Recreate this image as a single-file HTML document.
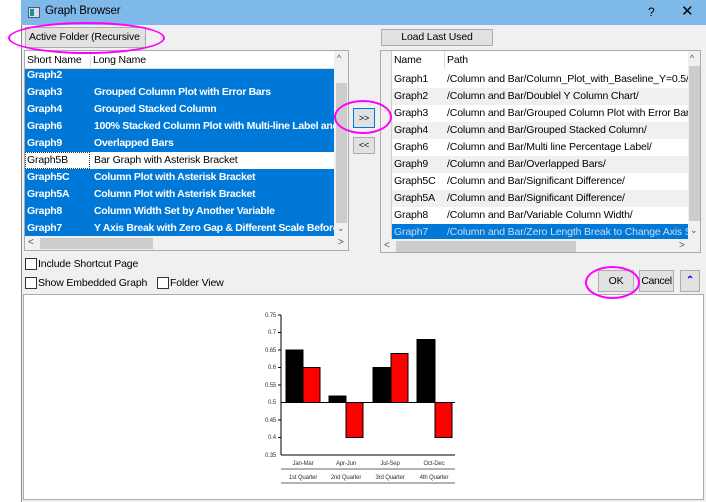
<!DOCTYPE html>
<html><head><style>
*{box-sizing:border-box;margin:0;padding:0}
body{width:706px;height:502px;background:#fff;position:relative;overflow:hidden;font-family:"Liberation Sans",sans-serif;font-size:10.5px;letter-spacing:-0.15px;color:#000}
.a{position:absolute;white-space:nowrap}
.btn{position:absolute;background:#e1e1e1;border:1px solid #adadad;text-align:center;white-space:nowrap}
.row{position:absolute;left:0;height:17px;line-height:17px;white-space:nowrap}
.sel{background:#0078d7;color:#fff;font-weight:bold;letter-spacing:-0.3px}
.cb{position:absolute;width:12px;height:12px;border:1px solid #333;background:#fff}
.ell{position:absolute;border:2px solid #f0f;border-radius:50%}
</style></head><body>
<div class="a" style="left:21px;top:0;width:685px;height:502px;background:#f0f0f0;border-left:1px solid #888"></div>
<div class="a" style="left:21px;top:0;width:685px;height:25px;background:#7fb9ea"></div>
<div class="a" style="left:28px;top:7px;width:12px;height:11px;border:1px solid #557;background:#dde"></div>
<div class="a" style="left:30px;top:9px;width:4px;height:7px;background:#198"></div>
<div class="a" style="left:45px;top:5px;font-size:11.5px">Graph Browser</div>
<div class="a" style="left:648px;top:5px;font-size:12px">?</div>
<div class="a" style="left:681px;top:2px;font-size:15px">✕</div>

<div class="btn" style="left:25px;top:27px;width:121px;height:21px;text-align:left;padding-left:3px;line-height:19px;overflow:hidden">Active Folder (Recursive <span style="font-size:9px;color:#555">&#8964;</span></div>

<div class="a" style="left:24px;top:50px;width:325px;height:201px;background:#fff;border:1px solid #aaa;overflow:hidden">
 <div class="a" style="left:0;top:0;width:310px;height:18px;border-bottom:1px solid #ddd;background:#fff"></div>
 <div class="a" style="left:2px;top:3px">Short Name</div>
 <div class="a" style="left:65px;top:0;width:1px;height:18px;background:#ddd"></div>
 <div class="a" style="left:68px;top:3px">Long Name</div>
 <div class="a" style="left:0;top:18px;width:309px;height:167px;overflow:hidden">
  <div class="row sel" style="top:-2px;width:310px"><span class="a" style="left:2px">Graph2</span></div>
  <div class="row sel" style="top:15px;width:310px"><span class="a" style="left:2px">Graph3</span><span class="a" style="left:69px">Grouped Column Plot with Error Bars</span></div>
  <div class="row sel" style="top:32px;width:310px"><span class="a" style="left:2px">Graph4</span><span class="a" style="left:69px">Grouped Stacked Column</span></div>
  <div class="row sel" style="top:49px;width:310px"><span class="a" style="left:2px">Graph6</span><span class="a" style="left:69px">100% Stacked Column Plot with Multi-line Label and Co</span></div>
  <div class="row sel" style="top:66px;width:310px"><span class="a" style="left:2px">Graph9</span><span class="a" style="left:69px">Overlapped Bars</span></div>
  <div class="row" style="top:83px;width:310px"><span class="a" style="left:0;top:0;width:65px;height:17px;border:1px dotted #333"></span><span class="a" style="left:2px">Graph5B</span><span class="a" style="left:69px">Bar Graph with Asterisk Bracket</span></div>
  <div class="row sel" style="top:100px;width:310px"><span class="a" style="left:2px">Graph5C</span><span class="a" style="left:69px">Column Plot with Asterisk Bracket</span></div>
  <div class="row sel" style="top:117px;width:310px"><span class="a" style="left:2px">Graph5A</span><span class="a" style="left:69px">Column Plot with Asterisk Bracket</span></div>
  <div class="row sel" style="top:134px;width:310px"><span class="a" style="left:2px">Graph8</span><span class="a" style="left:69px">Column Width Set by Another Variable</span></div>
  <div class="row sel" style="top:151px;width:310px"><span class="a" style="left:2px">Graph7</span><span class="a" style="left:69px">Y Axis Break with Zero Gap &amp; Different Scale Before</span></div>
 </div>
 <div class="a" style="left:309px;top:0;width:15px;height:185px;background:#f0f0f0"></div>
 <div class="a" style="left:311px;top:32px;width:11px;height:140px;background:#cdcdcd"></div>
 <div class="a" style="left:312px;top:2px;font-size:9px;color:#555">^</div>
 <div class="a" style="left:312px;top:172px;font-size:9px;color:#555">&#8964;</div>
 <div class="a" style="left:0;top:185px;width:324px;height:15px;background:#f0f0f0"></div>
 <div class="a" style="left:15px;top:187px;width:113px;height:11px;background:#cdcdcd"></div>
 <div class="a" style="left:3px;top:186px;font-size:10px;color:#555">&lt;</div>
 <div class="a" style="left:313px;top:186px;font-size:10px;color:#555">&gt;</div>
</div>

<div class="btn" style="left:353px;top:108px;width:22px;height:20px;border:1px solid #0078d7;line-height:18px;font-size:9px">&gt;&gt;</div>
<div class="btn" style="left:353px;top:137px;width:22px;height:17px;line-height:15px;font-size:9px">&lt;&lt;</div>

<div class="btn" style="left:381px;top:29px;width:112px;height:17px;line-height:15px">Load Last Used</div>

<div class="a" style="left:380px;top:50px;width:321px;height:203px;background:#fff;border:1px solid #aaa;overflow:hidden">
 <div class="a" style="left:0;top:0;width:11px;height:188px;background:#f0f0f0;border-right:1px solid #ccc"></div>
 <div class="a" style="left:13px;top:3px">Name</div>
 <div class="a" style="left:63px;top:0;width:1px;height:18px;background:#ddd"></div>
 <div class="a" style="left:66px;top:3px">Path</div>
 <div class="a" style="left:11px;top:18px;width:296px;height:170px;overflow:hidden">
  <div class="row" style="top:2px;width:296px;background:#fff"><span class="a" style="left:2px">Graph1</span><span class="a" style="left:55px">/Column and Bar/Column_Plot_with_Baseline_Y=0.5/</span></div>
  <div class="row" style="top:19px;width:296px;background:#f0f0f0"><span class="a" style="left:2px">Graph2</span><span class="a" style="left:55px">/Column and Bar/Doublel Y Column Chart/</span></div>
  <div class="row" style="top:36px;width:296px;background:#fff"><span class="a" style="left:2px">Graph3</span><span class="a" style="left:55px">/Column and Bar/Grouped Column Plot with Error Bars</span></div>
  <div class="row" style="top:53px;width:296px;background:#f0f0f0"><span class="a" style="left:2px">Graph4</span><span class="a" style="left:55px">/Column and Bar/Grouped Stacked Column/</span></div>
  <div class="row" style="top:70px;width:296px;background:#fff"><span class="a" style="left:2px">Graph6</span><span class="a" style="left:55px">/Column and Bar/Multi line Percentage Label/</span></div>
  <div class="row" style="top:87px;width:296px;background:#f0f0f0"><span class="a" style="left:2px">Graph9</span><span class="a" style="left:55px">/Column and Bar/Overlapped Bars/</span></div>
  <div class="row" style="top:104px;width:296px;background:#fff"><span class="a" style="left:2px">Graph5C</span><span class="a" style="left:55px">/Column and Bar/Significant Difference/</span></div>
  <div class="row" style="top:121px;width:296px;background:#f0f0f0"><span class="a" style="left:2px">Graph5A</span><span class="a" style="left:55px">/Column and Bar/Significant Difference/</span></div>
  <div class="row" style="top:138px;width:296px;background:#fff"><span class="a" style="left:2px">Graph8</span><span class="a" style="left:55px">/Column and Bar/Variable Column Width/</span></div>
  <div class="row" style="top:155px;width:296px;background:#0078d7;color:#cde;text-decoration:underline"><span class="a" style="left:2px">Graph7</span><span class="a" style="left:55px">/Column and Bar/Zero Length Break to Change Axis Scale</span></div>
 </div>
 <div class="a" style="left:307px;top:0;width:13px;height:188px;background:#f0f0f0"></div>
 <div class="a" style="left:308px;top:15px;width:11px;height:155px;background:#cdcdcd"></div>
 <div class="a" style="left:309px;top:2px;font-size:9px;color:#555">^</div>
 <div class="a" style="left:309px;top:174px;font-size:9px;color:#555">&#8964;</div>
 <div class="a" style="left:0;top:188px;width:320px;height:15px;background:#f0f0f0"></div>
 <div class="a" style="left:15px;top:190px;width:180px;height:11px;background:#cdcdcd"></div>
 <div class="a" style="left:3px;top:189px;font-size:10px;color:#555">&lt;</div>
 <div class="a" style="left:298px;top:189px;font-size:10px;color:#555">&gt;</div>
</div>

<div class="cb" style="left:25px;top:258px"></div>
<div class="a" style="left:38px;top:258px">Include Shortcut Page</div>
<div class="cb" style="left:25px;top:277px"></div>
<div class="a" style="left:38px;top:277px">Show Embedded Graph</div>
<div class="cb" style="left:157px;top:277px"></div>
<div class="a" style="left:170px;top:277px">Folder View</div>

<div class="btn" style="left:598px;top:270px;width:36px;height:22px;line-height:20px">OK</div>
<div class="btn" style="left:639px;top:270px;width:35px;height:22px;line-height:20px;letter-spacing:-0.4px">Cancel</div>
<div class="btn" style="left:680px;top:270px;width:20px;height:22px;line-height:20px;color:#00f;font-size:10px;font-weight:bold">&#8963;</div>

<div class="a" style="left:23px;top:294px;width:681px;height:206px;background:#fff;border:1px solid #aaa"></div>

<svg class="a" style="left:250px;top:305px" width="220" height="185">
 <g fill="#333" font-family="Liberation Sans" font-size="6">
  <text x="15" y="12">0.75</text><text x="18" y="29">0.7</text><text x="15" y="47">0.65</text><text x="18" y="64">0.6</text><text x="15" y="82">0.55</text><text x="18" y="99">0.5</text><text x="15" y="117">0.45</text><text x="18" y="134">0.4</text><text x="15" y="152">0.35</text>
 </g>
 <line x1="31" y1="10" x2="31" y2="150" stroke="#000"/>
 <g stroke="#000"><line x1="28" y1="10" x2="31" y2="10"/><line x1="28" y1="27.5" x2="31" y2="27.5"/><line x1="28" y1="45" x2="31" y2="45"/><line x1="28" y1="62.5" x2="31" y2="62.5"/><line x1="28" y1="80" x2="31" y2="80"/><line x1="28" y1="115" x2="31" y2="115"/><line x1="28" y1="132.5" x2="31" y2="132.5"/></g>
 <g stroke="#000" stroke-width="1">
  <rect x="36" y="45" width="17" height="52.5" fill="#000"/>
  <rect x="53" y="62.5" width="17" height="35" fill="#f00"/>
  <rect x="79" y="91" width="17" height="6.5" fill="#000"/>
  <rect x="96" y="97.5" width="17" height="35" fill="#f00"/>
  <rect x="123" y="62.5" width="17" height="35" fill="#000"/>
  <rect x="141" y="48.5" width="17" height="49" fill="#f00"/>
  <rect x="167" y="34.5" width="18" height="63" fill="#000"/>
  <rect x="185" y="97.5" width="17" height="35" fill="#f00"/>
 </g>
 <line x1="31" y1="97.5" x2="205" y2="97.5" stroke="#000"/>
 <line x1="31" y1="150" x2="205" y2="150" stroke="#000"/>
 <line x1="31" y1="164" x2="205" y2="164" stroke="#333" stroke-width="0.7"/>
 <line x1="31" y1="178" x2="205" y2="178" stroke="#333" stroke-width="0.7"/>
 <g fill="#333" font-family="Liberation Sans" font-size="6" text-anchor="middle">
  <text x="53" y="160">Jan-Mar</text><text x="96" y="160">Apr-Jun</text><text x="140" y="160">Jul-Sep</text><text x="184" y="160">Oct-Dec</text>
  <text x="53" y="174">1st Quarter</text><text x="96" y="174">2nd Quarter</text><text x="140" y="174">3rd Quarter</text><text x="184" y="174">4th Quarter</text>
 </g>
</svg>

<div class="ell" style="left:8px;top:22px;width:157px;height:32px"></div>
<div class="ell" style="left:334px;top:100px;width:58px;height:34px"></div>
<div class="ell" style="left:585px;top:266px;width:55px;height:33px"></div>
</body></html>
